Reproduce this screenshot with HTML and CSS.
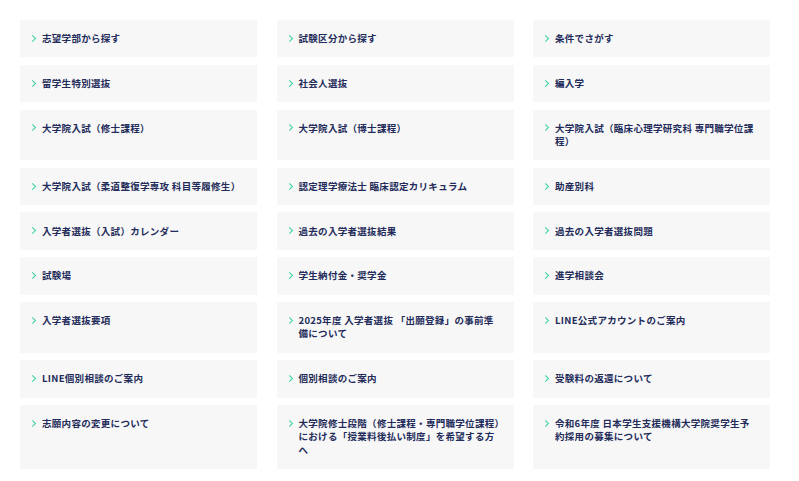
FILE: index.html
```html
<!DOCTYPE html>
<html lang="ja">
<head>
<meta charset="utf-8">
<title>入試情報</title>
<link rel="stylesheet" href="styles.css">
</head>
<body>
<ul class="links">
  <li class="card"><span class="chev"></span><span class="label">志望学部から探す</span></li>
  <li class="card"><span class="chev"></span><span class="label">試験区分から探す</span></li>
  <li class="card"><span class="chev"></span><span class="label">条件でさがす</span></li>
  <li class="card"><span class="chev"></span><span class="label">留学生特別選抜</span></li>
  <li class="card"><span class="chev"></span><span class="label">社会人選抜</span></li>
  <li class="card"><span class="chev"></span><span class="label">編入学</span></li>
  <li class="card"><span class="chev"></span><span class="label">大学院入試（修士課程）</span></li>
  <li class="card"><span class="chev"></span><span class="label">大学院入試（博士課程）</span></li>
  <li class="card"><span class="chev"></span><span class="label">大学院入試（臨床心理学研究科 専門職学位課程）</span></li>
  <li class="card"><span class="chev"></span><span class="label">大学院入試（柔道整復学専攻 科目等履修生）</span></li>
  <li class="card"><span class="chev"></span><span class="label">認定理学療法士 臨床認定カリキュラム</span></li>
  <li class="card"><span class="chev"></span><span class="label">助産別科</span></li>
  <li class="card"><span class="chev"></span><span class="label">入学者選抜（入試）カレンダー</span></li>
  <li class="card"><span class="chev"></span><span class="label">過去の入学者選抜結果</span></li>
  <li class="card"><span class="chev"></span><span class="label">過去の入学者選抜問題</span></li>
  <li class="card"><span class="chev"></span><span class="label">試験場</span></li>
  <li class="card"><span class="chev"></span><span class="label">学生納付金・奨学金</span></li>
  <li class="card"><span class="chev"></span><span class="label">進学相談会</span></li>
  <li class="card"><span class="chev"></span><span class="label">入学者選抜要項</span></li>
  <li class="card"><span class="chev"></span><span class="label">2025年度 入学者選抜 「出願登録」の事前準備について</span></li>
  <li class="card"><span class="chev"></span><span class="label">LINE公式アカウントのご案内</span></li>
  <li class="card"><span class="chev"></span><span class="label">LINE個別相談のご案内</span></li>
  <li class="card"><span class="chev"></span><span class="label">個別相談のご案内</span></li>
  <li class="card"><span class="chev"></span><span class="label">受験料の返還について</span></li>
  <li class="card"><span class="chev"></span><span class="label">志願内容の変更について</span></li>
  <li class="card"><span class="chev"></span><span class="label">大学院修士段階（修士課程・専門職学位課程）における「授業料後払い制度」を希望する方へ</span></li>
  <li class="card"><span class="chev"></span><span class="label">令和6年度 日本学生支援機構大学院奨学生予約採用の募集について</span></li>
</ul>
</body>
</html>
```
FILE: styles.css
```css
html, body {
  margin: 0;
  padding: 0;
  background: #ffffff;
}
body {
  padding: 20px 0 0 20px;
  font-family: "Noto Sans CJK JP", "Noto Sans", sans-serif;
}
.links {
  list-style: none;
  margin: 0;
  padding: 0;
  width: 750px;
  display: grid;
  grid-template-columns: repeat(3, 1fr);
  column-gap: 19.5px;
  row-gap: 7.3px;
}
.card {
  background: #f7f7f7;
  padding: 12.1px 12px 12.1px 12px;
  display: flex;
  align-items: flex-start;
  gap: 6px;
}
.chev {
  flex: none;
  width: 4px;
  height: 13.3px;
  position: relative;
}
.chev::before {
  content: "";
  position: absolute;
  left: -1.8px;
  top: 3.8px;
  width: 4.2px;
  height: 4.2px;
  border-top: 1.8px solid #3ed39b;
  border-right: 1.8px solid #3ed39b;
  transform: rotate(45deg);
}
.label {
  font-size: 9.5px;
  line-height: 13.3px;
  letter-spacing: 0.3px;
  font-weight: 700;
  color: #232b5a;
}
```
